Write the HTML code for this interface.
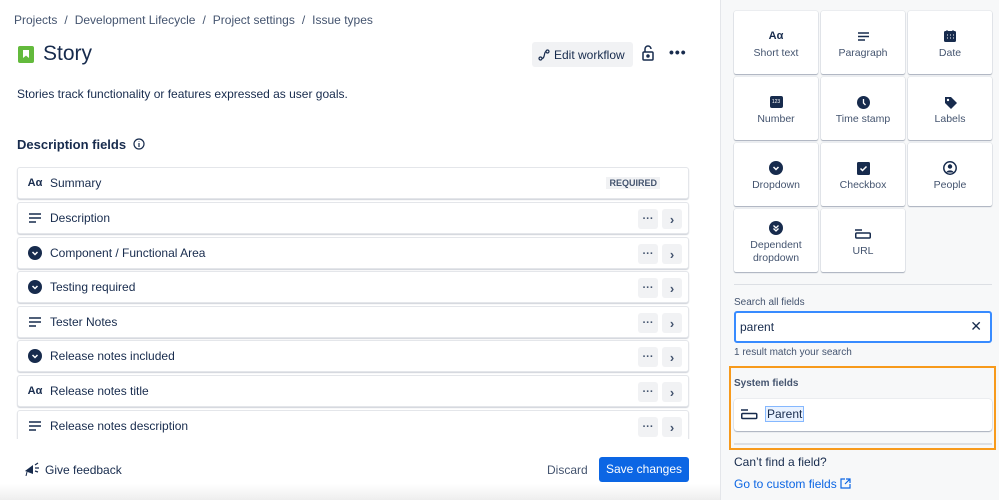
<!DOCTYPE html>
<html><head><style>
*{box-sizing:border-box;margin:0;padding:0}
body{width:999px;height:500px;overflow:hidden;font-family:"Liberation Sans",sans-serif;color:#172b4d;background:#fff;position:relative}
.a{position:absolute}
.crumb{left:14px;top:13px;font-size:12px;color:#44546f;white-space:nowrap}
.crumb span{margin:0 7px}
.row{position:absolute;left:17px;width:672px;height:32px;border:1px solid #e4e6ea;border-radius:3px;box-shadow:0 1px 1px rgba(9,30,66,.2);background:#fff;font-size:12px;display:flex;align-items:center}
.row .ic{width:16px;margin-left:9px;margin-right:7px;display:flex;justify-content:center}
.btns{position:absolute;right:6px;top:6px;display:flex;gap:4px}
.btns div{width:20px;height:20px;background:#f1f2f4;border-radius:3px;font-size:13px;display:flex;align-items:center;justify-content:center;color:#44546f;font-weight:bold}
.btns div:first-child{font-size:11px}
.right{left:720px;top:0;width:279px;height:500px;background:#f7f8f9;border-left:1px solid #e4e6ea}
.tile{position:absolute;width:84px;height:63px;background:#fff;border-radius:2px;box-shadow:0 1px 1px rgba(9,30,66,.3),0 0 1px rgba(9,30,66,.3);font-size:10.5px;color:#44546f;text-align:center}
.tile .ti{height:16px;margin-top:17px;display:flex;justify-content:center;align-items:center}
.tile .tl{margin-top:3px;line-height:13px}
</style></head><body>
<div class="a crumb">Projects<span>/</span>Development Lifecycle<span>/</span>Project settings<span>/</span>Issue types</div>
<div class="a" style="left:18px;top:46px;width:16px;height:17px;background:#63ba3c;border-radius:2px"><div style="position:absolute;left:5px;top:4px;width:6px;height:8px;background:#fff;clip-path:polygon(0 0,100% 0,100% 100%,50% 70%,0 100%)"></div></div>
<div class="a" style="left:43px;top:42px;font-size:21px">Story</div>
<div class="a" style="left:532px;top:42px;width:101px;height:25px;background:#f1f2f4;border-radius:3px;font-size:12px;display:flex;align-items:center;padding-left:6px;gap:4px"><svg width="12" height="12" viewBox="0 0 12 12" fill="none" stroke="#172b4d" stroke-width="1.2"><circle cx="2.5" cy="9.5" r="1.5"/><circle cx="9.5" cy="2.5" r="1.5"/><path d="M4 9.5c3 0 2-7 4-7"/></svg>Edit workflow</div>
<svg class="a" style="left:642px;top:45px" width="12" height="16" viewBox="0 0 12 16" fill="none" stroke="#172b4d" stroke-width="1.5"><path d="M3 7V4a3 3 0 0 1 6 0"/><rect x="1" y="7" width="10" height="8" rx="1"/><circle cx="6" cy="11" r="1" fill="#172b4d"/></svg>
<div class="a" style="left:669px;top:44px;font-size:14px;font-weight:bold;letter-spacing:1px">•••</div>
<div class="a" style="left:17px;top:87px;font-size:12px">Stories track functionality or features expressed as user goals.</div>
<div class="a" style="left:17px;top:137px;font-size:13px;font-weight:bold">Description fields</div>
<svg class="a" style="left:133px;top:138px" width="12" height="12" viewBox="0 0 12 12" fill="none" stroke="#172b4d" stroke-width="1.2"><circle cx="6" cy="6" r="5"/><path d="M6 5v4M6 3v.5"/></svg>
<div class="row" style="top:167px"><div class="ic" style="font-weight:bold;font-size:11px">Aα</div>Summary<div style="position:absolute;right:28px;top:9px;font-size:9px;font-weight:bold;color:#44546f;background:#f1f2f4;padding:1px 3px">REQUIRED</div></div>

<div class="row" style="top:202px"><div class="ic"><svg width="12" height="10"><path d="M0 1h12M0 5h12M0 9h7" stroke="#172b4d" stroke-width="1.6"/></svg></div>Description<div class="btns"><div>···</div><div>›</div></div></div>
<div class="row" style="top:237px"><div class="ic"><svg width="14" height="14"><circle cx="7" cy="7" r="7" fill="#172b4d"/><path d="M4.5 6l2.5 2.5L9.5 6" stroke="#fff" stroke-width="1.5" fill="none"/></svg></div>Component / Functional Area<div class="btns"><div>···</div><div>›</div></div></div>
<div class="row" style="top:271px"><div class="ic"><svg width="14" height="14"><circle cx="7" cy="7" r="7" fill="#172b4d"/><path d="M4.5 6l2.5 2.5L9.5 6" stroke="#fff" stroke-width="1.5" fill="none"/></svg></div>Testing required<div class="btns"><div>···</div><div>›</div></div></div>
<div class="row" style="top:306px"><div class="ic"><svg width="12" height="10"><path d="M0 1h12M0 5h12M0 9h7" stroke="#172b4d" stroke-width="1.6"/></svg></div>Tester Notes<div class="btns"><div>···</div><div>›</div></div></div>
<div class="row" style="top:340px"><div class="ic"><svg width="14" height="14"><circle cx="7" cy="7" r="7" fill="#172b4d"/><path d="M4.5 6l2.5 2.5L9.5 6" stroke="#fff" stroke-width="1.5" fill="none"/></svg></div>Release notes included<div class="btns"><div>···</div><div>›</div></div></div>
<div class="row" style="top:375px"><div class="ic" style="font-weight:bold;font-size:11px">Aα</div>Release notes title<div class="btns"><div>···</div><div>›</div></div></div>
<div class="a" style="left:0;top:408px;width:720px;height:31px;overflow:hidden"><div class="row" style="top:2px"><div class="ic"><svg width="12" height="10"><path d="M0 1h12M0 5h12M0 9h7" stroke="#172b4d" stroke-width="1.6"/></svg></div>Release notes description<div class="btns"><div>···</div><div>›</div></div></div></div>
<div class="a" style="left:0;top:446px;width:720px;height:54px;background:linear-gradient(#fff 0%,#fff 70%,#eee 100%)"></div>
<svg class="a" style="left:24px;top:462px" width="16" height="14" viewBox="0 0 16 14"><path d="M1 9l8-6v9z" fill="#172b4d"/><path d="M3 10l-1 4" stroke="#172b4d"/><path d="M11 3l3-2M11 6h4M11 9l3 1" stroke="#172b4d" stroke-width="1.2"/></svg>
<div class="a" style="left:45px;top:463px;font-size:12px">Give feedback</div>
<div class="a" style="left:547px;top:463px;font-size:12px;color:#44546f">Discard</div>
<div class="a" style="left:599px;top:457px;width:90px;height:25px;background:#0c66e4;border-radius:3px;color:#fff;font-size:12px;text-align:center;line-height:25px">Save changes</div>

<div class="a right">
<div class="tile" style="left:13px;top:11px"><div class="ti" style="font-weight:bold;font-size:11px;color:#172b4d">Aα</div><div class="tl">Short text</div></div>
<div class="tile" style="left:100px;top:11px"><div class="ti"><svg width="11" height="9"><path d="M0 1h11M0 4.5h11M0 8h7" stroke="#172b4d" stroke-width="1.6"/></svg></div><div class="tl">Paragraph</div></div>
<div class="tile" style="left:187px;top:11px"><div class="ti"><svg width="12" height="12"><rect x="0" y="1" width="12" height="11" rx="1.5" fill="#172b4d"/><path d="M3 0v2M9 0v2" stroke="#172b4d"/><path d="M3 5h1M6 5h1M9 5h1M3 8h1M6 8h1M9 8h1" stroke="#fff"/></svg></div><div class="tl">Date</div></div>
<div class="tile" style="left:13px;top:77px"><div class="ti"><div style="width:13px;height:12px;background:#172b4d;border-radius:2px;color:#fff;font-size:5px;line-height:12px">123</div></div><div class="tl">Number</div></div>
<div class="tile" style="left:100px;top:77px"><div class="ti"><svg width="13" height="13"><circle cx="6.5" cy="6.5" r="6.5" fill="#172b4d"/><path d="M6.5 3v4l2 2" stroke="#fff" stroke-width="1.3" fill="none"/></svg></div><div class="tl">Time stamp</div></div>
<div class="tile" style="left:187px;top:77px"><div class="ti"><svg width="13" height="13"><path d="M1 1h6l6 6-6 6-6-6z" fill="#172b4d"/><circle cx="4" cy="4" r="1.2" fill="#fff"/></svg></div><div class="tl">Labels</div></div>
<div class="tile" style="left:13px;top:143px"><div class="ti"><svg width="14" height="14"><circle cx="7" cy="7" r="7" fill="#172b4d"/><path d="M4.5 6l2.5 2.5L9.5 6" stroke="#fff" stroke-width="1.5" fill="none"/></svg></div><div class="tl">Dropdown</div></div>
<div class="tile" style="left:100px;top:143px"><div class="ti"><svg width="13" height="13"><rect width="13" height="13" rx="1.5" fill="#172b4d"/><path d="M3.5 6.5l2 2 4-4" stroke="#fff" stroke-width="1.5" fill="none"/></svg></div><div class="tl">Checkbox</div></div>
<div class="tile" style="left:187px;top:143px"><div class="ti"><svg width="14" height="14"><circle cx="7" cy="7" r="6.2" fill="none" stroke="#172b4d" stroke-width="1.5"/><circle cx="7" cy="5.5" r="2.2" fill="#172b4d"/><path d="M3 11.5a4.5 4 0 0 1 8 0" fill="#172b4d"/></svg></div><div class="tl">People</div></div>
<div class="tile" style="left:13px;top:209px"><div class="ti" style="margin-top:11px"><svg width="14" height="14"><circle cx="7" cy="7" r="7" fill="#172b4d"/><path d="M4.5 4.5l2.5 2.5 2.5-2.5M4.5 7.5l2.5 2.5 2.5-2.5" stroke="#fff" stroke-width="1.3" fill="none"/></svg></div><div class="tl">Dependent<br>dropdown</div></div>
<div class="tile" style="left:100px;top:209px"><div class="ti" style="margin-top:17px"><svg width="16" height="10"><path d="M0 1h7" stroke="#172b4d" stroke-width="1.5"/><rect x="0.75" y="4" width="14.5" height="5" rx="1" fill="none" stroke="#172b4d" stroke-width="1.5"/></svg></div><div class="tl">URL</div></div>
<div class="a" style="left:13px;top:284px;width:258px;height:1px;background:#dcdfe4"></div>
<div class="a" style="left:13px;top:297px;font-size:10px;color:#44546f">Search all fields</div>
<div class="a" style="left:13px;top:311px;width:258px;height:32px;background:#fff;border:2px solid #388bff;border-radius:3px;font-size:12px;padding:7px 4px">parent<span style="position:absolute;right:8px;top:5px;font-size:14px">✕</span></div>
<div class="a" style="left:13px;top:347px;font-size:10px;color:#44546f">1 result match your search</div>
<div class="a" style="left:8px;top:366px;width:267px;height:84px;border:2px solid #f79a1c"></div>
<div class="a" style="left:13px;top:378px;font-size:10px;font-weight:bold;color:#44546f">System fields</div>
<div class="a" style="left:13px;top:399px;width:258px;height:32px;background:#fff;border-radius:3px;box-shadow:0 1px 1px rgba(9,30,66,.3),0 0 1px rgba(9,30,66,.3)"></div>
<svg class="a" style="left:20px;top:409px" width="17" height="11"><path d="M0 1h7" stroke="#172b4d" stroke-width="1.5"/><rect x="0.75" y="4.5" width="15" height="5" rx="1" fill="none" stroke="#172b4d" stroke-width="1.5"/></svg>
<div class="a" style="left:45px;top:407px;font-size:12px;background:#e9f2ff;outline:1px solid #85b8ff;padding:0 1px">Parent</div>
<div class="a" style="left:13px;top:443px;width:258px;height:2px;background:#dcdfe4"></div>
<div class="a" style="left:13px;top:455px;font-size:12px">Can’t find a field?</div>
<div class="a" style="left:13px;top:477px;font-size:12px;color:#0c66e4">Go to custom fields <svg width="11" height="11" style="vertical-align:-1px"><path d="M5 1H1v9h9V6M6 1h4v4M10 1L5 6" stroke="#0c66e4" stroke-width="1.2" fill="none"/></svg></div>
</div>
</body></html>
